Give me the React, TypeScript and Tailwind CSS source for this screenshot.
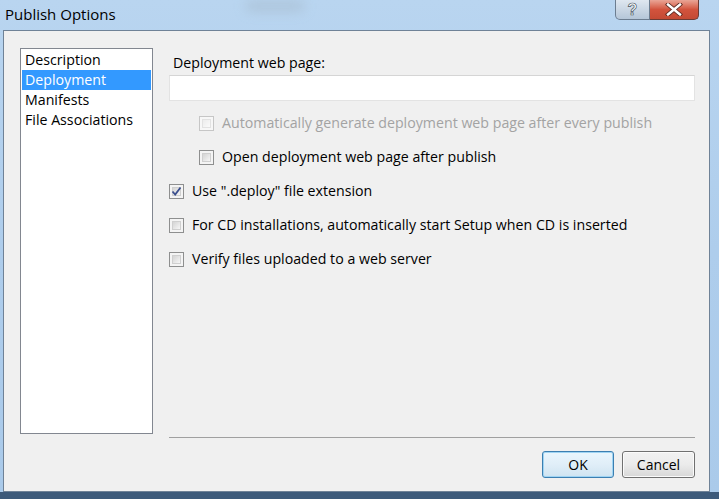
import React from "react";

function Check({ checked = false, disabled = false }: { checked?: boolean; disabled?: boolean }) {
  return (
    <div
      className={
        "w-[15px] h-[15px] shrink-0 border p-[2px] " +
        (disabled ? "border-[#c6c6c6] bg-[#f7f7f7]" : "border-[#8e8f8f] bg-[#f4f4f4]")
      }
    >
      <div
        className={
          "w-full h-full relative " +
          (disabled
            ? "bg-gradient-to-br from-[#ececec] to-[#fafafa] border border-[#e2e2e2]"
            : "bg-gradient-to-br from-[#d4d4d4] to-[#f6f6f6] border border-[#cfcfcf]")
        }
      >
        {checked && (
          <svg className="absolute -left-[2px] -top-[2px]" width="11" height="11" viewBox="0 0 11 11">
            <path d="M1.5 5.5 L4.2 8.5 L9.5 1.5" fill="none" stroke="#3b4f8e" strokeWidth="1.8" />
          </svg>
        )}
      </div>
    </div>
  );
}

function Row({ label, checked, disabled, indent }: { label: string; checked?: boolean; disabled?: boolean; indent?: boolean }) {
  return (
    <div className={"flex items-center h-[20px] gap-[8px] " + (indent ? "pl-[30px]" : "")}>
      <Check checked={checked} disabled={disabled} />
      <span className={disabled ? "text-[#a3a3a3]" : "text-black"}>{label}</span>
    </div>
  );
}

export default function App() {
  const font = { fontFamily: '"Open Sans", "Noto Sans", sans-serif' };
  return (
    <div
      className="w-[719px] h-[499px] flex flex-col bg-gradient-to-b from-[#b9d5f0] via-[#aecdec] to-[#aacaea] overflow-hidden relative text-[14.2px]"
      style={font}
    >
      {/* title bar */}
      <div className="h-[30px] flex items-start shrink-0 relative">
        <div className="pl-[5px] pt-[4px] text-[15px] leading-[20px] text-black">Publish Options</div>
        <div className="absolute left-[245px] top-0 w-[60px] h-[12px] rounded-full bg-[#a9bfd3] blur-[6px] opacity-70" />
        <div className="ml-auto mr-[20px] flex h-[20px]">
          <div className="w-[35px] h-[20px] border border-[#6c7d90] border-t-0 rounded-bl-[5px] bg-gradient-to-b from-[#dfe7f0] to-[#b5c6d8] flex items-center justify-center">
            <span
              className="text-white font-bold text-[16px] leading-none"
              style={{ fontFamily: '"Liberation Sans", sans-serif', WebkitTextStroke: "0.7px #4a5563" }}
            >
              ?
            </span>
          </div>
          <div className="w-[49px] h-[20px] border border-[#6c3b34] border-t-0 border-l-0 rounded-br-[5px] bg-gradient-to-b from-[#e9a596] via-[#d2533d] to-[#c44a34] flex items-center justify-center">
            <svg width="18" height="13" viewBox="0 0 18 13">
              <path d="M3 1.5 L15 11.5 M15 1.5 L3 11.5" stroke="#5a2a22" strokeWidth="4.2" strokeLinecap="square" />
              <path d="M3 1.5 L15 11.5 M15 1.5 L3 11.5" stroke="#ffffff" strokeWidth="2.4" strokeLinecap="square" />
            </svg>
          </div>
        </div>
      </div>

      {/* client */}
      <div className="flex-1 ml-[3px] mr-[9px] border border-[#6f8297] bg-[#f0f0f0] flex items-start pl-[16px] pt-[17px]">
        <div className="w-[133px] h-[386px] shrink-0 border border-[#828790] bg-white p-[1px] leading-[20px]">
          <div className="pl-[3px] h-[20px] text-black">Description</div>
          <div className="pl-[3px] h-[20px] bg-[#3399ff] text-white">Deployment</div>
          <div className="pl-[3px] h-[20px] text-black">Manifests</div>
          <div className="pl-[3px] h-[20px] text-black">File Associations</div>
        </div>

        <div className="ml-[16px] w-[526px] h-[430px] flex flex-col">
          <div className="pl-[4px] pt-[6px] h-[24px] leading-[18px] text-black">Deployment web page:</div>
          <div className="mt-[3px] h-[26px] border border-[#e3e3e3] border-t-[#d5d5d5] bg-white" />
          <div className="mt-[12px] flex flex-col gap-[14px]">
            <Row label="Automatically generate deployment web page after every publish" disabled indent />
            <Row label="Open deployment web page after publish" indent />
            <Row label={'Use ".deploy" file extension'} checked />
            <Row label="For CD installations, automatically start Setup when CD is inserted" />
            <Row label="Verify files uploaded to a web server" />
          </div>
          <div className="mt-auto h-px bg-[#a0a0a0]" />
          <div className="mt-[13px] flex justify-end gap-[8px] h-[27px]">
            <button className="w-[72px] h-[27px] rounded-[3px] border border-[#3c7fb1] bg-gradient-to-b from-[#eaf6fd] via-[#e0eef8] to-[#cfe4f1] shadow-[inset_0_0_0_1px_#9fd4f3] text-black text-[14px]">
              OK
            </button>
            <button className="w-[73px] h-[27px] rounded-[3px] border border-[#707070] bg-gradient-to-b from-[#f2f2f2] via-[#ebebeb] to-[#d8d8d8] shadow-[inset_0_0_0_1px_#fbfbfb] text-black text-[14px]">
              Cancel
            </button>
          </div>
        </div>
      </div>
      <div className="h-[7px] shrink-0 bg-[#3d5a7a]" />
    </div>
  );
}
